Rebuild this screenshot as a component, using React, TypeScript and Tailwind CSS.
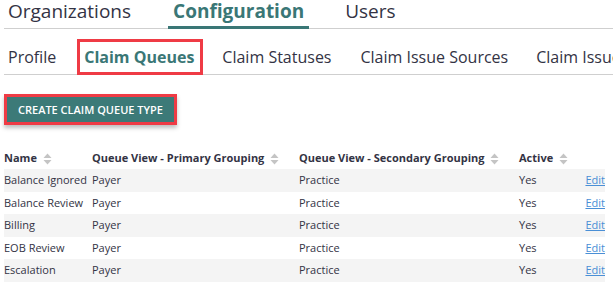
import React from "react";

const rows = [
  { name: "Balance Ignored", primary: "Payer", secondary: "Practice", active: "Yes" },
  { name: "Balance Review", primary: "Payer", secondary: "Practice", active: "Yes" },
  { name: "Billing", primary: "Payer", secondary: "Practice", active: "Yes" },
  { name: "EOB Review", primary: "Payer", secondary: "Practice", active: "Yes" },
  { name: "Escalation", primary: "Payer", secondary: "Practice", active: "Yes" },
];

function SortIcon() {
  return (
    <svg width="9" height="12" viewBox="0 0 9 12" className="ml-[6px] inline-block">
      <path d="M4.5 0.5 L8.5 5 L0.5 5 Z" fill="#c4c4c4" />
      <path d="M4.5 11.5 L8.5 7 L0.5 7 Z" fill="#c4c4c4" />
    </svg>
  );
}

export default function App() {
  return (
    <div className="h-[283px] w-[613px] overflow-hidden bg-white font-['Open_Sans',sans-serif] text-[#333344]">
      {/* top tabs */}
      <div className="ml-[4px] flex h-[29px] items-start whitespace-nowrap border-b border-[#cfcfcf] text-[19px] leading-[22px]">
        <div className="px-[4px]">Organizations</div>
        <div className="ml-[33px] h-[29px] border-b-[3px] border-[#3a7776] px-[5px] font-bold text-[#3a7776]">
          Configuration
        </div>
        <div className="ml-[36px]">Users</div>
      </div>

      {/* sub tabs */}
      <div className="ml-[4px] mt-[10px] flex h-[36px] items-center whitespace-nowrap border-b border-[#cfcfcf] text-[16px]">
        <div className="pl-[4px]">Profile</div>
        <div className="ml-[21px] flex h-[36px] items-center border-[3px] border-[#ef3b45] pl-[4px] pr-[6px] font-bold text-[#3a7776]">
          Claim Queues
        </div>
        <div className="ml-[19px]">Claim Statuses</div>
        <div className="ml-[29px]">Claim Issue Sources</div>
        <div className="ml-[28px]">Claim Issue Types</div>
      </div>

      {/* button */}
      <div className="ml-[4px] mt-[19px] inline-flex border-[3px] border-[#ef3b45] shadow-[0_3px_4px_rgba(0,0,0,0.25)]">
        <button className="bg-[#3c7a78] px-[11px] py-[5px] text-[11px] font-semibold leading-[15px] text-white">
          CREATE CLAIM QUEUE TYPE
        </button>
      </div>

      {/* table */}
      <table className="ml-[4px] mt-[23px] w-[601px] border-collapse text-[11px]">
        <thead>
          <tr className="h-[21px] text-left font-bold">
            <th className="w-[88px] p-0 font-bold">Name<SortIcon /></th>
            <th className="w-[207px] p-0 font-bold">Queue View - Primary Grouping<SortIcon /></th>
            <th className="w-[220px] p-0 font-bold">Queue View - Secondary Grouping<SortIcon /></th>
            <th className="p-0 font-bold">Active<SortIcon /></th>
            <th className="p-0"></th>
          </tr>
        </thead>
        <tbody>
          {rows.map((r, i) => (
            <tr key={r.name} className={i % 2 === 0 ? "h-[22.6px] bg-[#f4f4f4]" : "h-[22.6px] bg-white"}>
              <td className="p-0">{r.name}</td>
              <td className="p-0">{r.primary}</td>
              <td className="p-0">{r.secondary}</td>
              <td className="p-0">{r.active}</td>
              <td className="p-0 text-right">
                <a href="#" className="text-[#4a8fd6] underline">Edit</a>
              </td>
            </tr>
          ))}
        </tbody>
      </table>
    </div>
  );
}
